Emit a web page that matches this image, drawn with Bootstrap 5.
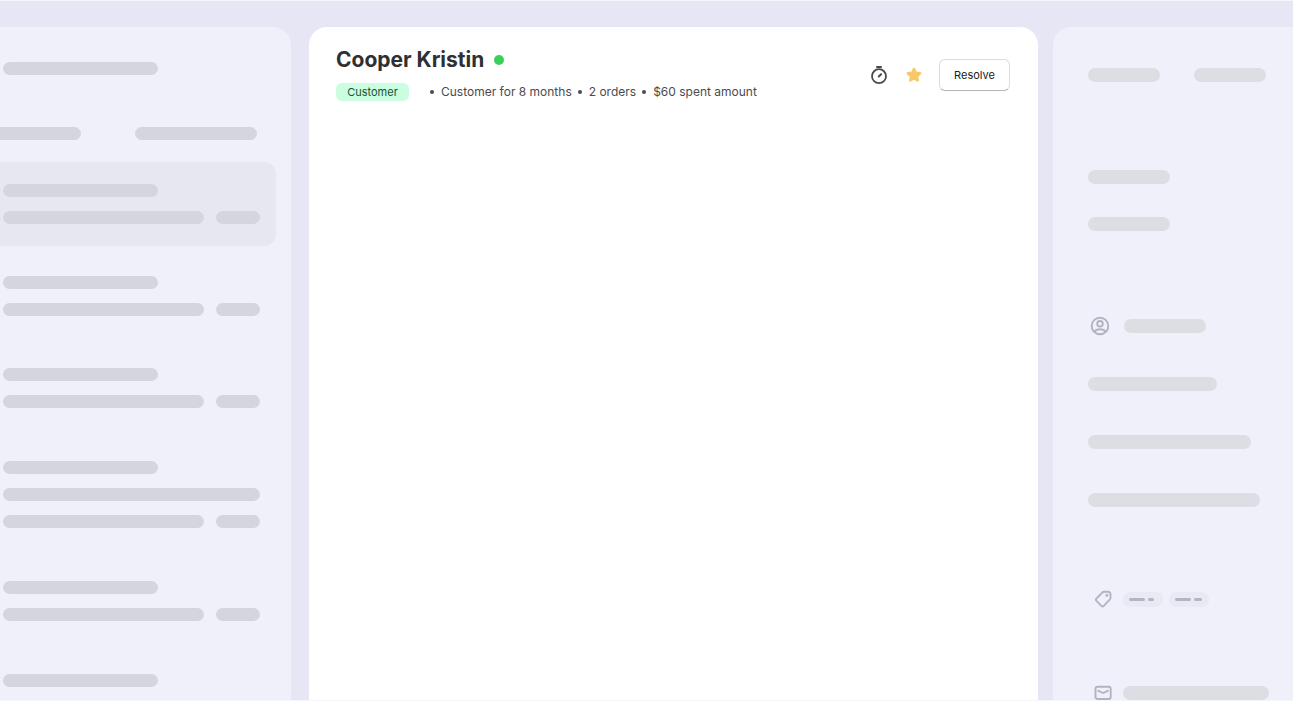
<!DOCTYPE html>
<html lang="en">
<head>
<meta charset="utf-8">
<meta name="viewport" content="width=device-width, initial-scale=1">
<title>Cooper Kristin</title>
<link rel="stylesheet" href="https://cdn.jsdelivr.net/npm/bootstrap@5.3.0/dist/css/bootstrap.min.css">
<style>
body { font-family: Inter, "Liberation Sans", sans-serif; background: #e6e6f4; color: #303032; }
.app-shell { border-top: 1px solid #f5f5fb; border-bottom: 1px solid #f5f5fb; padding-top: 26px; }
.side-panel { background: #f0f0fa; }
.left-panel { flex: 0 0 291px; border-top-right-radius: 18px; margin-right: 18px; padding-top: 35px; }
.main-panel { border-radius: 18px 18px 0 0; padding: 20px 28px 20px 27px; }
.right-panel { flex: 0 0 240px; border-top-left-radius: 18px; margin-left: 15px; padding: 41px 0 0 35px; }
.bar { height: 13px; border-radius: 7px; background: #d5d5df; flex: none; }
.right-panel .bar { height: 14px; background: #dddee3; }
.left-title { margin: 0 0 52px 3px; }
.left-tabs { gap: 54px; margin-bottom: 22px; }
.left-tabs .bar:first-child { border-radius: 0 7px 7px 0; }
.thread { padding: 22px 0 22px 3px; margin-right: 15px; border-radius: 0 12px 12px 0; }
.thread.tall { padding-top: 23px; padding-bottom: 23px; }
.thread.current { background: #e7e7f1; }
.thread-lines { gap: 14px; }
.thread-row { gap: 12px; }
.w-title { width: 155px; } .w-tab-a { width: 81px; } .w-tab-b { width: 122px; }
.w-line { width: 201px; } .w-full { width: 257px; } .w-time { width: 44px; }
.w-72 { width: 72px; } .w-82 { width: 82px; } .w-129 { width: 129px; }
.w-146 { width: 146px; } .w-163 { width: 163px; } .w-172 { width: 172px; }
.top-bars { gap: 34px; margin-bottom: 88px; }
.group-a { gap: 33px; margin-bottom: 88px; }
.group-b { gap: 44px; margin-bottom: 83px; }
.group-c { gap: 76px; }
.icon-line { height: 14px; margin-left: 2px; }
.icon-line .bar { margin-left: 14px; }
.low-line { height: 18px; margin-left: 6px; }
.low-line svg { margin-right: 11px; }
.chip-list { gap: 6px; }
.chip { height: 15px; width: 40px; border-radius: 7px; background: #e9e9f3; gap: 3px; padding-left: 6px; }
.chip i { height: 3px; width: 16px; border-radius: 2px; background: #b5b5c2; }
.chip i + i { width: 6px; } .chip i.wide { width: 8px; }
.person-block { padding-bottom: 2px; }
.person-name { gap: 10px; margin-bottom: 10px; }
.person { font-size: 21px; line-height: 26px; font-weight: 700; }
.online { width: 10px; height: 10px; background: #3bcf5a; }
.customer-tag { font-size: 11px; line-height: 18px; width: 73px; border-radius: 6px; background: #cbfde0; color: #145236; }
.facts { font-size: 12px; line-height: 18px; color: #4b4b4d; margin-left: 21px; }
.facts li { display: flex; align-items: center; margin-right: 6px; }
.facts li::before { content: ""; width: 4px; height: 4px; border-radius: 50%; background: #4b4b4d; margin-right: 7px; }
.icon-btn { background: none; border: 0; padding: 0; display: flex; }
.resolve { --bs-btn-font-size: 11px; --bs-btn-line-height: 16px; --bs-btn-padding-y: 7px; --bs-btn-padding-x: 0; --bs-btn-border-radius: 6px; --bs-btn-border-color: #dcdcdc; --bs-btn-bg: #fff; width: 71px; color: #202022; border-bottom-color: #b4b4b4; }
</style>
</head>
<body>
<div class="app-shell d-flex vh-100 overflow-hidden">
  <aside class="side-panel left-panel overflow-hidden" aria-label="Conversations">
    <div class="bar w-title left-title"></div>
    <div class="left-tabs d-flex"><div class="bar w-tab-a"></div><div class="bar w-tab-b"></div></div>
    <div class="d-flex flex-column gap-2">
      <div class="thread current"><div class="thread-lines d-flex flex-column"><div class="bar w-title"></div><div class="thread-row d-flex"><div class="bar w-line"></div><div class="bar w-time"></div></div></div></div>
      <div class="thread"><div class="thread-lines d-flex flex-column"><div class="bar w-title"></div><div class="thread-row d-flex"><div class="bar w-line"></div><div class="bar w-time"></div></div></div></div>
      <div class="thread"><div class="thread-lines d-flex flex-column"><div class="bar w-title"></div><div class="thread-row d-flex"><div class="bar w-line"></div><div class="bar w-time"></div></div></div></div>
      <div class="thread tall"><div class="thread-lines d-flex flex-column"><div class="bar w-title"></div><div class="bar w-full"></div><div class="thread-row d-flex"><div class="bar w-line"></div><div class="bar w-time"></div></div></div></div>
      <div class="thread"><div class="thread-lines d-flex flex-column"><div class="bar w-title"></div><div class="thread-row d-flex"><div class="bar w-line"></div><div class="bar w-time"></div></div></div></div>
      <div class="thread tall"><div class="thread-lines d-flex flex-column"><div class="bar w-title"></div></div></div>
    </div>
  </aside>

  <main class="main-panel flex-grow-1 bg-white">
    <header class="d-flex justify-content-between align-items-start">
      <div class="person-block">
        <div class="person-name d-flex align-items-center">
          <h1 class="person mb-0">Cooper Kristin</h1>
          <span class="online rounded-circle" role="img" aria-label="Online"></span>
        </div>
        <div class="d-flex align-items-center">
          <span class="customer-tag text-center">Customer</span>
          <ul class="facts list-unstyled d-flex mb-0">
            <li>Customer for 8 months</li>
            <li>2 orders</li>
            <li>$60 spent amount</li>
          </ul>
        </div>
      </div>
      <div class="d-flex align-items-center align-self-center">
        <button type="button" class="icon-btn me-3" aria-label="Snooze">
          <svg width="20" height="20" viewBox="0 0 20 20" fill="none" stroke="#4a4a4c" stroke-width="1.8" stroke-linecap="round"><circle cx="10" cy="11.2" r="7"/><path d="M7.900 2h4.200"/><path d="M9.800 11.500l2.300-2.300" stroke-width="2"/></svg>
        </button>
        <button type="button" class="icon-btn me-3" aria-label="Star">
          <svg width="18" height="18" viewBox="0 0 18 18" fill="#f8ca66" stroke="#f8ca66" stroke-width="2.4" stroke-linejoin="round"><path d="M9 2.800l1.900 3.900 4.300.6-3.100 3 .7 4.200L9 12.500l-3.800 2 .7-4.200-3.100-3 4.300-.6z"/></svg>
        </button>
        <button type="button" class="btn resolve">Resolve</button>
      </div>
    </header>
  </main>

  <aside class="side-panel right-panel overflow-hidden" aria-label="Details">
    <div class="top-bars d-flex"><div class="bar w-72"></div><div class="bar w-72"></div></div>
    <div class="group-a d-flex flex-column"><div class="bar w-82"></div><div class="bar w-82"></div></div>
    <div class="group-b d-flex flex-column">
      <div class="icon-line d-flex align-items-center">
        <svg width="20" height="20" viewBox="0 0 20 20" fill="none" stroke="#b3b3c0" stroke-width="1.9"><circle cx="10" cy="10" r="8.300"/><circle cx="10" cy="7.800" r="2.800"/><path d="M4.300 15.800c1.400-1.800 3.400-2.500 5.700-2.500s4.300.7 5.700 2.500"/></svg>
        <div class="bar w-82"></div>
      </div>
      <div class="bar w-129"></div>
      <div class="bar w-163"></div>
      <div class="bar w-172"></div>
    </div>
    <div class="group-c d-flex flex-column">
      <div class="low-line d-flex align-items-center">
        <svg width="18" height="18" viewBox="0 0 18 18" fill="none" stroke="#b3b3c0" stroke-width="1.9" stroke-linejoin="round"><path d="M10.300 1.800h3.700a2.500 2.500 0 0 1 2.500 2.500v3.400c0 .8-.3 1.400-.8 2l-5.900 6.100a1.700 1.700 0 0 1-2.400 0l-4.900-4.900a1.700 1.700 0 0 1 0-2.400l5.700-5.900c.6-.5 1.300-.8 2.100-.8z"/><circle cx="12.900" cy="5.300" r=".6"/></svg>
        <div class="chip-list d-flex">
          <div class="chip d-flex align-items-center"><i></i><i></i></div>
          <div class="chip d-flex align-items-center"><i></i><i class="wide"></i></div>
        </div>
      </div>
      <div class="low-line d-flex align-items-center">
        <svg width="18" height="18" viewBox="0 0 18 18" fill="none" stroke="#b3b3c0" stroke-width="1.9" stroke-linecap="round" stroke-linejoin="round"><rect x="1.500" y="2.800" width="15.200" height="12.200" rx="2"/><path d="M4.300 6.800l4.800 2.200 4.800-2.200"/></svg>
        <div class="bar w-146"></div>
      </div>
    </div>
  </aside>
</div>
<script src="https://cdn.jsdelivr.net/npm/bootstrap@5.3.0/dist/js/bootstrap.bundle.min.js"></script>
</body>
</html>
